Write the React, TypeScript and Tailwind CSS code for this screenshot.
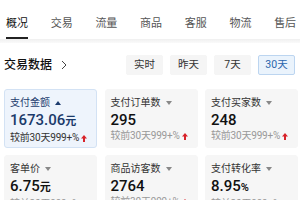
import React from "react";

const TABS = ["概况", "交易", "流量", "商品", "客服", "物流", "售后"];
const RANGES = ["实时", "昨天", "7天", "30天"];

interface Metric {
  label: string;
  value: string;
  unit?: string;
}

const METRICS: Metric[] = [
  { label: "支付金额", value: "1673.06", unit: "元" },
  { label: "支付订单数", value: "295" },
  { label: "支付买家数", value: "248" },
  { label: "客单价", value: "6.75", unit: "元" },
  { label: "商品访客数", value: "2764" },
  { label: "支付转化率", value: "8.95", unit: "%" },
];

const UpArrow = () => (
  <svg width="6" height="7" viewBox="0 0 6 7" className="ml-[2px] shrink-0">
    <path d="M3 0 L6 3.4 L4 3.4 L4 7 L2 7 L2 3.4 L0 3.4 Z" fill="#d8232a" />
  </svg>
);

const Caret = ({ up, color }: { up?: boolean; color: string }) => (
  <svg width="6" height="4" viewBox="0 0 6 4" className="ml-[5px]">
    {up ? <path d="M0 4 L3 0 L6 4 Z" fill={color} /> : <path d="M0 0 L6 0 L3 4 Z" fill={color} />}
  </svg>
);

const MetricCard = ({ m, active }: { m: Metric; active: boolean }) => (
  <div
    className={`h-[59px] overflow-hidden rounded-[3px] border pl-[5px] pt-[7px] ${
      active ? "border-[#d3e2f4] bg-[#eef4fc]" : "border-[#f6f6f6] bg-[#f6f6f6]"
    }`}
  >
    <div className={`flex items-center text-[10px] leading-[12px] ${active ? "text-[#1d3c6e]" : "text-[#333]"}`}>
      {m.label}
      <Caret up={active} color={active ? "#1d3c6e" : "#888"} />
    </div>
    <div
      className={`mt-[2px] flex items-baseline text-[15px] font-medium leading-[18px] ${
        active ? "text-[#1b3a6a]" : "text-[#111]"
      }`}
    >
      {m.value}
      {m.unit && <span className="text-[11px] font-semibold">{m.unit}</span>}
    </div>
    <div
      className={`mt-[1px] flex items-center whitespace-nowrap text-[10px] leading-[12px] tracking-[-0.2px] ${
        active ? "text-[#333]" : "text-[#999]"
      }`}
    >
      较前30天999+%
      <UpArrow />
    </div>
  </div>
);

export default function App() {
  return (
    <div
      className="h-[200px] w-[300px] overflow-hidden bg-white"
      style={{ fontFamily: 'Roboto, "Noto Sans CJK SC", sans-serif' }}
    >
      {/* tabs */}
      <div className="flex h-[39px] items-end gap-[22.7px] pl-[6px]">
        {TABS.map((t, i) => (
          <div key={t} className="flex flex-col items-center">
            <span className={`text-[11px] leading-[14px] ${i === 0 ? "text-[#111]" : "text-[#555]"}`}>{t}</span>
            <div className={`mt-[6px] h-[2px] w-[22px] ${i === 0 ? "bg-[#222]" : "bg-transparent"}`} />
          </div>
        ))}
      </div>
      <div className="h-[4px] bg-gradient-to-b from-[#f0f0f0] to-[#fafafa]" />

      {/* header */}
      <div className="flex h-[40px] items-center justify-between pl-[4px] pr-[5px] pt-[3px]">
        <div className="flex items-center text-[12px] font-medium text-[#111]">
          交易数据
          <svg width="6" height="10" viewBox="0 0 6 10" className="ml-[9px]">
            <path d="M1 1 L5 5 L1 9" fill="none" stroke="#444" strokeWidth="1" />
          </svg>
        </div>
        <div className="flex gap-[7px]">
          {RANGES.map((r, i) => {
            const on = i === RANGES.length - 1;
            return (
              <div
                key={r}
                className={`flex h-[20px] w-[37px] items-center justify-center rounded-[2px] border text-[10.5px] ${
                  on ? "border-[#bcd5f0] bg-[#eaf3fc] text-[#2b66ad]" : "border-[#f5f5f5] bg-[#f5f5f5] text-[#333]"
                }`}
              >
                {r}
              </div>
            );
          })}
        </div>
      </div>

      {/* metrics */}
      <div className="mt-[6px] grid w-[298px] grid-cols-3 gap-x-[7.5px] gap-y-[7px] pl-[4px]">
        {METRICS.map((m, i) => (
          <MetricCard key={m.label} m={m} active={i === 0} />
        ))}
      </div>
    </div>
  );
}
